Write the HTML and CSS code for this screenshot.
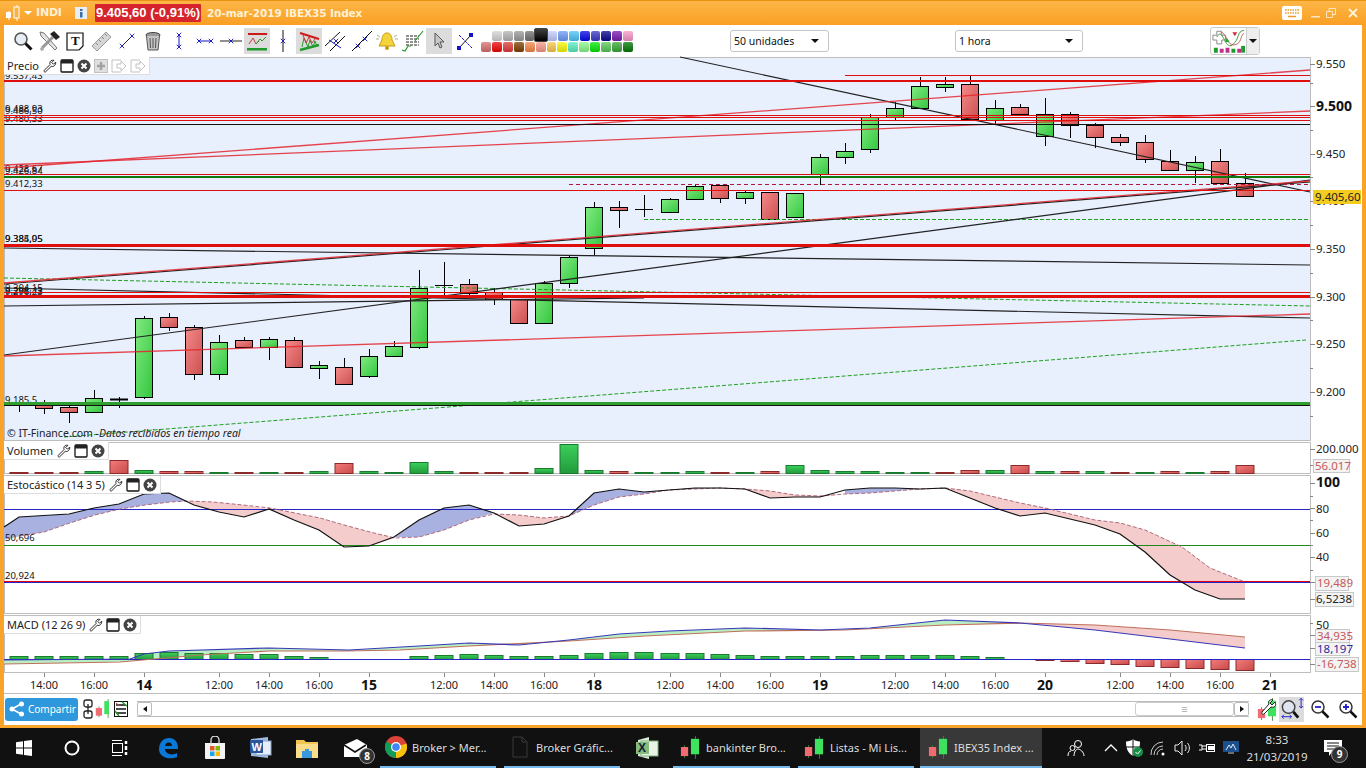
FILE: index.html
```html
<!DOCTYPE html>
<html lang="es">
<head>
<meta charset="utf-8">
<title>IBEX35 Index</title>
<link rel="stylesheet" href="styles.css">
</head>
<body>
<svg class="defs" width="0" height="0">
  <defs>
    <linearGradient id="gg" x1="0" y1="0" x2="1" y2="1"><stop offset="0" stop-color="#82ea82"/><stop offset="1" stop-color="#33c73f"/></linearGradient>
    <linearGradient id="rg" x1="0" y1="0" x2="1" y2="1"><stop offset="0" stop-color="#f58a8a"/><stop offset="1" stop-color="#cc5050"/></linearGradient>
    <linearGradient id="hg" x1="0" y1="0" x2="0" y2="1"><stop offset="0" stop-color="#3ccf5a"/><stop offset="1" stop-color="#219a3c"/></linearGradient>
    <linearGradient id="hr" x1="0" y1="0" x2="1" y2="1"><stop offset="0" stop-color="#f47c7c"/><stop offset="1" stop-color="#c84a4a"/></linearGradient>
    <symbol id="wrench" viewBox="0 0 16 16"><path d="M14.500 3.500 12 6 10 4l2.500-2.500C10 .8 7.700 2.300 7.800 5c0 .5.1 1 .3 1.300L1.600 12.800c-.9 1-.2 2.400 1.200 2l6.600-6.400c2.800.9 5.500-1.500 5.100-4.900Z" fill="#fff" stroke="#222" stroke-width="1.100"/></symbol>
    <symbol id="win" viewBox="0 0 14 14"><rect x="1" y="1" width="12" height="12" rx="1" fill="#fff" stroke="#111" stroke-width="1.300"/><rect x="1" y="1" width="12" height="3.500" fill="#222"/></symbol>
    <symbol id="close" viewBox="0 0 14 14"><circle cx="7" cy="7" r="6.500" fill="#444"/><path d="M4.500 4.500l5 5m0-5-5 5" stroke="#fff" stroke-width="2"/></symbol>
    <symbol id="bx" viewBox="0 0 8 8"><path d="M1 1l6 6m0-6-6 6" stroke="#1313c4" stroke-width="1.200" fill="none"/></symbol>
    <symbol id="cndl" viewBox="0 0 22 26"><path d="M5 11v14M17 1v25" stroke="#3a8a3a"/><rect x="1" y="13" width="8" height="10" fill="#f26a72"/><rect x="12" y="4" width="9" height="17" fill="#3fe25f"/></symbol>
  </defs>
</svg>

<div class="window">
  <header class="titlebar">
    <svg class="t-candle" viewBox="0 0 16 18" width="16" height="18"><path d="M4 7v9M12 1v16" stroke="#fff"/><rect x="1" y="8" width="5" height="6" fill="#fff"/><rect x="9" y="3" width="5" height="11" fill="#fbb13f" stroke="#fff"/></svg>
    <span class="t-arrow"></span>
    <span class="t-indi">INDI</span>
    <svg class="t-info" viewBox="0 0 12 12" width="12" height="12"><rect width="12" height="12" fill="#e7eef6"/><rect x="5" y="2" width="2.500" height="2" fill="#3a6ea8"/><rect x="5" y="5" width="2.500" height="5.500" fill="#3a6ea8"/></svg>
    <span class="t-price">9.405,60 (-0,91%)</span>
    <span class="t-name">20-mar-2019 IBEX35 Index</span>
    <span class="spacer"></span>
    <svg class="t-key" viewBox="0 0 20 14" width="20" height="14"><rect width="20" height="14" rx="2" fill="#fff"/><path d="M3 4h14M3 7h14" stroke="#e99a2a" stroke-width="1.500" stroke-dasharray="1.500 1"/><path d="M6 10.500h8" stroke="#e99a2a" stroke-width="1.500"/></svg>
    <svg class="t-ctl" viewBox="0 0 10 10" width="10" height="10"><rect x="0" y="8" width="9" height="1.500" fill="#fde6c0"/></svg>
    <svg class="t-ctl" viewBox="0 0 10 10" width="10" height="10"><path d="M.5 3.500h6v6h-6zM3 3.500V.5h6.500v6H7" fill="none" stroke="#fde6c0"/></svg>
    <svg class="t-ctl t-x" viewBox="0 0 10 10" width="10" height="10"><path d="M1 1l8 8m0-8-8 8" stroke="#fff3dc" stroke-width="1.800"/></svg>
  </header>

  <div class="content">
    <div class="toolbar">
      <div class="tools">
        <span class="tbtn"><svg viewBox="0 0 22 22"><circle cx="9" cy="9" r="6" fill="#e7edf5" stroke="#555" stroke-width="1.600"/><path d="M13.500 13.500l6 6" stroke="#111" stroke-width="3"/></svg></span>
        <span class="tbtn"><svg viewBox="0 0 22 22"><path d="M3 6l14 14 2-2L6 3 2 2z" fill="#e4e4e4" stroke="#777"/><path d="M4 18 15 7" stroke="#999" stroke-width="3"/><path d="M12 4l4-3 6 6-4 3z" fill="#222"/><path d="M3 21l-1-3 3-1 1 3z" fill="#aaa"/></svg></span>
        <span class="tbtn"><svg viewBox="0 0 22 22"><path d="M3 3h16v13l-4 4H3z" fill="#fff" stroke="#111" stroke-width="1.200"/><text x="7" y="15" class="ic-t">T</text></svg></span>
        <span class="tbtn"><svg viewBox="0 0 22 22"><path d="M2 16 16 2l5 5L7 21z" fill="#d6d6d6" stroke="#999"/><path d="M6 13l2 2M9 10l2 2M12 7l2 2M15 4l2 2" stroke="#888"/></svg></span>
        <span class="tbtn"><svg viewBox="0 0 22 22"><path d="M6 16 16 6" stroke="#222"/><use href="#bx" x="3" y="13" width="6" height="6"/><use href="#bx" x="13" y="3" width="6" height="6"/></svg></span>
        <span class="tbtn"><svg viewBox="0 0 22 22"><ellipse cx="11" cy="5" rx="7" ry="2.500" fill="#999" stroke="#444"/><path d="M4.500 6l1.500 14h10l1.500-14" fill="#c4c4c4" stroke="#555"/><path d="M8 8l.5 10M11 8v10M14 8l-.5 10" stroke="#555"/></svg></span>
        <span class="tbtn"><svg viewBox="0 0 22 22"><path d="M11 4v14" stroke="#1313c4"/><use href="#bx" x="8" y="2" width="6" height="6"/><use href="#bx" x="8" y="14" width="6" height="6"/></svg></span>
        <span class="tbtn"><svg viewBox="0 0 22 22"><path d="M4 11h14" stroke="#1313c4"/><use href="#bx" x="2" y="8" width="6" height="6"/><use href="#bx" x="14" y="8" width="6" height="6"/></svg></span>
        <span class="tbtn"><svg viewBox="0 0 22 22"><path d="M0 11h22" stroke="#222"/><use href="#bx" x="8" y="8" width="6" height="6"/></svg></span>
        <span class="tbtn active"><svg viewBox="0 0 22 22"><rect x="2" y="3" width="19" height="2" fill="#c81a1a"/><rect x="1" y="18" width="20" height="2.500" fill="#1f9a2c"/><path d="M3 14l4-6 3 6 3-3" stroke="#c83a3a" fill="none"/><path d="M10 14l4-5 2 2 4-4" stroke="#2a9a2a" fill="none"/></svg></span>
        <span class="tbtn"><svg viewBox="0 0 22 22"><path d="M11 0v22" stroke="#111"/><use href="#bx" x="8" y="8" width="6" height="6"/></svg></span>
        <span class="tbtn active"><svg viewBox="0 0 22 22"><path d="M2 3l19 6" stroke="#d01818" stroke-width="2"/><path d="M2 20l19-5" stroke="#1f9a2c" stroke-width="2.500"/><path d="M4 17l2-9 4 9 2-7 3 7 2-6 2 5" stroke="#2a9a2a" fill="none"/><path d="M5 5l3 8 3-6 3 6 3-4" stroke="#c83a3a" fill="none"/></svg></span>
        <span class="tbtn"><svg viewBox="0 0 22 22"><path d="M1 16 16 2M6 21 21 6" stroke="#111"/><path d="M5 10l12 8" stroke="#1313c4"/><use href="#bx" x="9" y="8" width="6" height="6"/></svg></span>
        <span class="tbtn"><svg viewBox="0 0 22 22"><path d="M2 21 22 1" stroke="#111"/><use href="#bx" x="5" y="13" width="6" height="6"/><use href="#bx" x="12" y="6" width="6" height="6"/></svg></span>
        <span class="tbtn"><svg viewBox="0 0 22 22"><path d="M11 3c-4 0-5 4-5 7l-3 6h16l-3-6c0-3-1-7-5-7z" fill="#f4d43a" stroke="#c89a10"/><circle cx="11" cy="18" r="2" fill="#c89a10"/><path d="M1 5l3 2M21 5l-3 2M0 9h3M22 9h-3" stroke="#aa8"/></svg></span>
        <span class="tbtn"><svg viewBox="0 0 22 22"><path d="M4 6h13M4 9h13M4 12h13M4 15h13" stroke="#222" stroke-dasharray="3 1"/><path d="M0 20l3 1 3-5h3M13 11 21 1" stroke="#2a9a2a" fill="none" stroke-width="1.200"/></svg></span>
        <span class="tbtn active"><svg viewBox="0 0 22 22"><path d="M7 3v13l3-3 2 5 2-1-2-5h4z" fill="#c8c8c8" stroke="#555"/></svg></span>
        <span class="tbtn"><svg viewBox="0 0 22 22"><path d="M5 18 17 5" stroke="#111"/><path d="M5 5l13 13" stroke="#1313c4" stroke-dasharray="3 1"/><rect x="3" y="16" width="4" height="4" fill="#1313c4"/><rect x="15" y="3" width="4" height="4" fill="#1313c4"/></svg></span>
      </div>
      <div class="palette">
        <div class="swatch-row row-top">
          <i class="sw c1"></i><i class="sw c2"></i><i class="sw c3"></i><i class="sw c4"></i><i class="sw sel"></i><i class="sw c6"></i><i class="sw c7"></i><i class="sw c8"></i><i class="sw c9"></i><i class="sw c10"></i><i class="sw c11"></i><i class="sw c12"></i><i class="sw c13"></i>
        </div>
        <div class="swatch-row">
          <i class="sw d1"></i><i class="sw d2"></i><i class="sw d3"></i><i class="sw d4"></i><i class="sw d5"></i><i class="sw d6"></i><i class="sw d7"></i><i class="sw d8"></i><i class="sw d9"></i><i class="sw d10"></i><i class="sw d11"></i><i class="sw d12"></i><i class="sw d13"></i><i class="sw d14"></i>
        </div>
      </div>
      <div class="select sel-units"><span>50 unidades</span><b class="caret"></b></div>
      <div class="select sel-time"><span>1 hora</span><b class="caret"></b></div>
      <div class="indic">
        <span class="indic-main"><svg viewBox="0 0 36 26" width="36" height="26"><path d="M2 7h4V3h5v4h4v5h-4v4H6v-4H2z" fill="#fff" stroke="#888"/><path d="M6 9c6-12 8 14 16 8s4-14 12-15" stroke="#3a9a3a" fill="none"/><path d="M10 4c6 0 6 14 14 13s6-10 10-12" stroke="#c85a5a" fill="none"/><path d="M14 14h5l-2.500-4z" fill="#1faa2a"/><path d="M22 4h5l-2.500 4z" fill="#d02a3a"/><path d="M3 20h4v5H3zM21 21h4v4h-4z" fill="#1f9a2c"/><path d="M9 21h4v4H9zM15 20h4v5h-4zM27 21h4v4h-4z" fill="#c0308a"/><path d="M31 18h4v7h-4z" fill="#1f9a2c"/></svg></span>
        <span class="indic-drop"><b class="caret"></b></span>
      </div>
    </div>

    <section class="panel panel-price">
      <svg class="chart" viewBox="0 57 1358 384" width="1358" height="384">
        <rect class="plot" x="0.5" y="57.500" width="1306" height="383"/>
        <g transform="translate(-4 0)">
        <g stroke="#000" fill="none">
          <path d="M19.500 402v10M44.500 400v14M69.500 404v19M94.500 390v22M119.500 397v11M144.500 316v83M169.500 313v18M194.500 325v55M219.500 335v45M244.500 337v10M269.500 337v23M294.500 337v30M319.500 361v18M344.500 358v26M369.500 349v29M394.500 341v15M419.500 270v79M444.500 262v36M469.500 279v17M494.500 288v17M519.500 299v24M544.500 281v42M569.500 255v33M594.500 202v54M619.500 201v27M644.500 195v22M670.500 198v14M695.500 184v15M720.500 185v18M745.500 190v14M770.500 192v27M795.500 193v24M820.500 154v31M845.500 143v21M870.500 114v39M895.500 102v18M920.500 77v31M945.500 77v15M970.500 76v43M995.500 100v25M1020.500 104v10M1045.500 98v48M1070.500 112v26M1095.500 123v25M1120.500 134v12M1145.500 135v28M1170.500 150v20M1195.500 156v27M1220.500 149v34M1245.500 173v23"/>
          <path d="M10 404.500h18M435 285.500h18M635 209.500h18"/>
          <path d="M110 399.500h18" stroke-width="2"/>
        </g>
        <g fill="url(#gg)" stroke="#000">
          <rect x="85.500" y="398.500" width="17" height="14"/><rect x="135.500" y="318.500" width="17" height="79"/><rect x="210.500" y="342.500" width="17" height="32"/><rect x="260.500" y="339.500" width="17" height="8"/><rect x="310.500" y="365.500" width="17" height="3"/><rect x="360.500" y="356.500" width="17" height="20"/><rect x="385.500" y="346.500" width="17" height="10"/><rect x="410.500" y="288.500" width="17" height="59"/><rect x="535.500" y="283.500" width="17" height="40"/><rect x="560.500" y="257.500" width="17" height="26"/><rect x="585.500" y="207.500" width="17" height="41"/><rect x="661.500" y="199.500" width="17" height="13"/><rect x="686.500" y="186.500" width="17" height="13"/><rect x="736.500" y="192.500" width="17" height="6"/><rect x="786.500" y="193.500" width="17" height="24"/><rect x="811.500" y="157.500" width="17" height="17"/><rect x="836.500" y="151.500" width="17" height="6"/><rect x="861.500" y="117.500" width="17" height="32"/><rect x="886.500" y="108.500" width="17" height="9"/><rect x="911.500" y="86.500" width="17" height="22"/><rect x="936.500" y="84.500" width="17" height="3"/><rect x="986.500" y="108.500" width="17" height="12"/><rect x="1036.500" y="114.500" width="17" height="22"/><rect x="1186.500" y="162.500" width="17" height="8"/>
        </g>
        <g fill="url(#rg)" stroke="#000">
          <rect x="35.500" y="405.500" width="17" height="3"/><rect x="60.500" y="407.500" width="17" height="5"/><rect x="160.500" y="317.500" width="17" height="10"/><rect x="185.500" y="327.500" width="17" height="47"/><rect x="235.500" y="340.500" width="17" height="7"/><rect x="285.500" y="340.500" width="17" height="27"/><rect x="335.500" y="367.500" width="17" height="17"/><rect x="460.500" y="284.500" width="17" height="9"/><rect x="485.500" y="292.500" width="17" height="7"/><rect x="510.500" y="299.500" width="17" height="24"/><rect x="610.500" y="207.500" width="17" height="3"/><rect x="711.500" y="185.500" width="17" height="13"/><rect x="761.500" y="192.500" width="17" height="27"/><rect x="961.500" y="84.500" width="17" height="35"/><rect x="1011.500" y="107.500" width="17" height="7"/><rect x="1061.500" y="114.500" width="17" height="11"/><rect x="1086.500" y="125.500" width="17" height="12"/><rect x="1111.500" y="137.500" width="17" height="5"/><rect x="1136.500" y="142.500" width="17" height="17"/><rect x="1161.500" y="161.500" width="17" height="9"/><rect x="1211.500" y="161.500" width="17" height="22"/><rect x="1236.500" y="183.500" width="17" height="13"/>
        </g>
        </g>
        <g class="labels">
          <text x="1" y="112">9.488,93</text><text x="1" y="114">9.486,50</text><text x="1" y="122">9.480,33</text>
          <text x="1" y="172">9.428,67</text><text x="1" y="174">9.426,84</text><text x="1" y="187">9.412,33</text>
          <text x="1" y="242">9.385,05</text><text x="1" y="242">9.384,95</text>
          <text x="1" y="291">9.304,15</text><text x="1" y="294">9.298,43</text><text x="1" y="295">9.296,23</text>
          <text x="1" y="403">9.185,5</text><text x="1" y="79">9.537,43</text>
        </g>
        <g fill="none" class="lines">
          <path class="l-green-d" d="M60 437 1302 340"/>
          <path class="l-green-d" d="M640 219.500H1306"/>
          <path class="l-green-d" d="M0 278 1306 306"/>
          <path class="l-blk" d="M676 57 1306 192"/>
          <path class="l-blk" d="M0 355 1306 180"/>
          <path class="l-blk" d="M0 284 1306 182"/>
          <path class="l-blk" d="M0 248 1306 265"/>
          <path class="l-blk" d="M0 288 1306 318"/>
          <path class="l-blk" d="M0 306 640 298"/>
          <path class="l-red-s" d="M0 283 1306 181"/>
          <path class="l-red-s" d="M0 356 1306 314"/>
          <path class="l-red-s" d="M0 168 1306 70"/>
          <path class="l-red-s" d="M0 165 1306 111"/>
          <path class="l-red crisp" d="M841 75.500H1306M0 115.500H1306M0 117.500H1306M0 120.500H1306M0 174.500H1306M0 190.500H1306M0 292.500H1306"/>
          <path class="l-maroon crisp" d="M565 184.500H1306"/>
          <path class="l-k crisp" d="M0 124.500H1306M0 405.500H1306"/>
          <path class="l-red w2 crisp" d="M0 81H1306"/>
          <path class="l-red w3 crisp" d="M0 245.500H1306M0 296.500H1306"/>
          <path class="l-dgreen w2 crisp" d="M0 177H1306"/>
          <path class="l-lgreen w3 crisp" d="M0 403H1306"/>
        </g>
        <text x="3" y="437" class="wm">© IT-Finance.com -<tspan class="wm-i">Datos recibidos en tiempo real</tspan></text>
        <path class="tick" d="M1306 64.500h5M1306 83.500h3M1306 106.500h5M1306 130.500h3M1306 154.500h5M1306 177.500h3M1306 201.500h5M1306 225.500h3M1306 249.500h5M1306 273.500h3M1306 297.500h5M1306 320.500h3M1306 344.500h5M1306 368.500h3M1306 392.500h5M1306 416.500h3"/>
        <g class="axis">
          <text x="1312" y="68">9.550</text><text x="1312" y="205">9.400</text><text x="1312" y="158">9.450</text><text x="1312" y="253">9.350</text><text x="1312" y="301">9.300</text><text x="1312" y="348">9.250</text><text x="1312" y="396">9.200</text>
          <text x="1312" y="111" class="ax-b">9.500</text>
        </g>
        <rect x="1309" y="190" width="48" height="14" class="tag-y"/>
        <text x="1311" y="201" class="axis-t">9.405,60</text>
      </svg>
      <div class="legend leg-price"><span>Precio</span>
        <svg class="lg" width="14" height="14"><use href="#wrench"/></svg>
        <svg class="lg" width="14" height="14"><use href="#win"/></svg>
        <svg class="lg" width="14" height="14"><use href="#close"/></svg>
        <svg class="lg dim" viewBox="0 0 14 14" width="14" height="14"><rect x=".5" y=".5" width="13" height="13" fill="#ddd" stroke="#bbb"/><path d="M7 3v8M3 7h8" stroke="#999" stroke-width="2.500"/></svg>
        <svg class="lg dim" viewBox="0 0 16 14" width="16" height="14"><path d="M10 1H1v12h9M10 5H6v4h4v3l5-5-5-5z" fill="#fff" stroke="#bbb"/></svg>
        <svg class="lg dim" viewBox="0 0 16 14" width="16" height="14"><path d="M10 1H1v12h9M10 5H6v4h4v3l5-5-5-5z" fill="#fff" stroke="#bbb"/></svg>
      </div>
    </section>

    <section class="panel panel-vol">
      <svg class="chart" viewBox="0 442 1358 32" width="1358" height="32">
        <rect class="plot-w" x="0.5" y="442.500" width="1306" height="31"/>
        <g fill="url(#hr)" stroke="#8a2a2a">
          <rect x="6" y="472.500" width="18" height="1"/><rect x="31" y="472.500" width="18" height="1"/><rect x="56" y="472.500" width="18" height="1"/><rect x="106" y="460.500" width="18" height="13"/><rect x="156" y="471.500" width="18" height="2"/><rect x="181" y="471.500" width="18" height="2"/><rect x="231" y="472.500" width="18" height="1"/><rect x="281" y="472.500" width="18" height="1"/><rect x="331" y="463.500" width="18" height="10"/><rect x="456" y="472.500" width="18" height="1"/><rect x="481" y="472.500" width="18" height="1"/><rect x="506" y="472.500" width="18" height="1"/><rect x="606" y="471.500" width="18" height="2"/><rect x="707" y="472.500" width="18" height="1"/><rect x="757" y="471.500" width="18" height="2"/><rect x="932" y="472.500" width="18" height="1"/><rect x="957" y="470.500" width="18" height="3"/><rect x="1007" y="465.500" width="18" height="8"/><rect x="1057" y="471.500" width="18" height="2"/><rect x="1107" y="472.500" width="18" height="1"/><rect x="1157" y="471.500" width="18" height="2"/><rect x="1207" y="471.500" width="18" height="2"/><rect x="1232" y="465.500" width="18" height="8"/>
        </g>
        <g fill="url(#hg)" stroke="#1a7a30">
          <rect x="81" y="471.500" width="18" height="2"/><rect x="131" y="470.500" width="18" height="3"/><rect x="206" y="472.500" width="18" height="1"/><rect x="256" y="472.500" width="18" height="1"/><rect x="306" y="471.500" width="18" height="2"/><rect x="356" y="471.500" width="18" height="2"/><rect x="381" y="472.500" width="18" height="1"/><rect x="406" y="462.500" width="18" height="11"/><rect x="431" y="471.500" width="18" height="2"/><rect x="531" y="468.500" width="18" height="5"/><rect x="556" y="444.500" width="18" height="29"/><rect x="581" y="470.500" width="18" height="3"/><rect x="631" y="472.500" width="18" height="1"/><rect x="657" y="472.500" width="18" height="1"/><rect x="682" y="471.500" width="18" height="2"/><rect x="732" y="472.500" width="18" height="1"/><rect x="782" y="465.500" width="18" height="8"/><rect x="807" y="470.500" width="18" height="3"/><rect x="832" y="471.500" width="18" height="2"/><rect x="857" y="471.500" width="18" height="2"/><rect x="882" y="472.500" width="18" height="1"/><rect x="907" y="472.500" width="18" height="1"/><rect x="982" y="470.500" width="18" height="3"/><rect x="1032" y="471.500" width="18" height="2"/><rect x="1082" y="471.500" width="18" height="2"/><rect x="1132" y="472.500" width="18" height="1"/><rect x="1182" y="472.500" width="18" height="1"/>
        </g>
        <path class="tick" d="M1306 449.500h5M1306 465.500h5"/>
        <g class="axis"><text x="1312" y="453">200.000</text></g>
        <rect x="1309.500" y="459.500" width="36" height="13" class="tag-g"/>
        <text x="1311" y="470" class="axis-r">56.017</text>
      </svg>
      <div class="legend leg-vol"><span>Volumen</span>
        <svg class="lg" width="14" height="14"><use href="#wrench"/></svg>
        <svg class="lg" width="14" height="14"><use href="#win"/></svg>
        <svg class="lg" width="14" height="14"><use href="#close"/></svg>
      </div>
    </section>

    <section class="panel panel-stoch">
      <svg class="chart" viewBox="0 475 1358 139" width="1358" height="139">
        <rect class="plot-w" x="0.5" y="475.500" width="1306" height="138"/>
        <g class="f-blue">
          <polygon points="0,527 15,517 65,514 90,508 115,504 140,494 165,493 183,501 166,502 141,505 116,509 91,515 66,523 40,532 16,536 0,540"/>
          <polygon points="391,537 415,520 440,508 465,505 490,513 465,520 440,530 415,537"/>
          <polygon points="565,516 590,493 615,489 640,492 665,490 691,488 716,488 691,489 665,490 640,494 615,497 590,505"/>
          <polygon points="841,490 866,488 891,488 916,489 941,488 916,489 891,491 866,493 841,494"/>
        </g>
        <g class="f-pink">
          <polygon points="183,501 190,505 215,512 240,517 265,509 239,505 209,502"/>
          <polygon points="266,508 316,518 340,525 366,532 391,538 365,546 340,547 315,530 290,520 265,509"/>
          <polygon points="490,514 515,515 540,518 565,516 540,524 515,526 490,513"/>
          <polygon points="741,489 766,491 791,495 816,496 841,494 816,497 791,497 766,498"/>
          <polygon points="941,488 966,491 991,497 1016,503 1041,508 1066,514 1091,520 1116,523 1141,530 1178,547 1206,568 1241,582 1241,599 1216,599 1191,590 1166,575 1141,552 1116,534 1091,525 1066,519 1041,513 1016,516 991,508 966,498"/>
        </g>
        <path class="l-stgreen crisp" d="M0 545.500H1306"/>
        <path class="l-blue crisp" d="M0 509.500H1306M0 582.500H1306"/>
        <path class="l-dred crisp" d="M0 581.500H1306"/>
        <path class="s-d" d="M16 536 40 532 66 523 91 515 116 509 141 505 166 502 183 501 209 502 239 505 266 508 316 518 340 525 366 532 391 538 415 537 440 530 465 520 490 514 515 515 540 518 565 516 590 505 615 497 640 494 665 490 691 489 716 488 741 489 766 491 791 495 816 496 841 494 866 493 891 491 916 489 941 488 966 491 991 497 1016 503 1041 508 1066 514 1091 520 1116 523 1141 530 1178 547 1206 568 1241 582"/>
        <path class="s-k" d="M0 527 15 517 65 514 90 508 115 504 140 494 165 493 190 505 215 512 240 517 265 509 290 520 315 530 340 547 365 546 390 537 415 520 440 508 465 505 490 513 515 526 540 524 565 516 590 493 615 489 640 492 665 490 691 488 716 488 741 489 766 498 791 497 816 497 841 490 866 488 891 488 916 489 941 488 966 498 991 508 1016 516 1041 513 1066 519 1091 525 1116 534 1141 552 1166 575 1191 590 1216 599 1241 599"/>
        <g class="labels"><text x="1" y="541">50,696</text><text x="1" y="579">20,924</text></g>
        <path class="tick" d="M1306 483.500h5M1306 496.500h3M1306 508.500h5M1306 520.500h3M1306 533.500h5M1306 545.500h3M1306 557.500h5M1306 570.500h3M1306 582.500h5M1306 599.500h5"/>
        <g class="axis"><text x="1312" y="513">80</text><text x="1312" y="537">60</text><text x="1312" y="561">40</text>
        <text x="1312" y="487" class="ax-b">100</text></g>
        <rect x="1311.500" y="576.500" width="33" height="14" class="tag-g"/>
        <text x="1313" y="587" class="axis-r">19,489</text>
        <rect x="1311.500" y="592.500" width="38" height="14" class="tag-g"/>
        <text x="1312" y="603" class="axis-t">6,5238</text>
      </svg>
      <div class="legend leg-stoch"><span>Estocástico (14 3 5)</span>
        <svg class="lg" width="14" height="14"><use href="#wrench"/></svg>
        <svg class="lg" width="14" height="14"><use href="#win"/></svg>
        <svg class="lg" width="14" height="14"><use href="#close"/></svg>
      </div>
    </section>

    <section class="panel panel-macd">
      <svg class="chart" viewBox="0 615 1358 58" width="1358" height="58">
        <rect class="plot-w" x="0.5" y="615.500" width="1306" height="57"/>
        <g class="f-green"><polygon points="0,660 126,659 140,654 165,651 265,648 345,650 415,646 465,643 515,645 565,640 615,634 665,631 741,628 816,630 866,628 941,620 1016,623 941,625 841,630 741,631 641,636 565,641 465,646 396,650 341,651 265,651 196,655 116,662 0,664"/></g>
        <polygon class="f-pink" points="1016,623 1091,625 1166,630 1241,637 1241,648 1166,639 1091,630"/>
        <g fill="url(#hg)" stroke="#1a7a30">
          <rect x="6" y="656.500" width="18" height="3"/><rect x="31" y="656.500" width="18" height="3"/><rect x="56" y="656.500" width="18" height="3"/><rect x="81" y="656.500" width="18" height="3"/><rect x="106" y="656.500" width="18" height="3"/><rect x="131" y="653.500" width="18" height="6"/><rect x="156" y="652.500" width="18" height="7"/><rect x="181" y="653.500" width="18" height="6"/><rect x="206" y="653.500" width="18" height="6"/><rect x="231" y="654.500" width="18" height="5"/><rect x="256" y="654.500" width="18" height="5"/><rect x="281" y="656.500" width="18" height="3"/><rect x="306" y="657.500" width="18" height="2"/><rect x="406" y="656.500" width="18" height="3"/><rect x="431" y="655.500" width="18" height="4"/><rect x="456" y="654.500" width="18" height="5"/><rect x="481" y="655.500" width="18" height="4"/><rect x="506" y="656.500" width="18" height="3"/><rect x="531" y="656.500" width="18" height="3"/><rect x="556" y="655.500" width="18" height="4"/><rect x="581" y="653.500" width="18" height="6"/><rect x="606" y="652.500" width="18" height="7"/><rect x="631" y="652.500" width="18" height="7"/><rect x="657" y="653.500" width="18" height="6"/><rect x="682" y="653.500" width="18" height="6"/><rect x="707" y="654.500" width="18" height="5"/><rect x="732" y="655.500" width="18" height="4"/><rect x="757" y="656.500" width="18" height="3"/><rect x="782" y="656.500" width="18" height="3"/><rect x="807" y="656.500" width="18" height="3"/><rect x="832" y="656.500" width="18" height="3"/><rect x="857" y="655.500" width="18" height="4"/><rect x="882" y="655.500" width="18" height="4"/><rect x="907" y="655.500" width="18" height="4"/><rect x="932" y="655.500" width="18" height="4"/><rect x="957" y="656.500" width="18" height="3"/><rect x="982" y="657.500" width="18" height="2"/>
        </g>
        <g fill="url(#hr)" stroke="#8a2a2a">
          <rect x="1032" y="659.500" width="18" height="1"/><rect x="1057" y="659.500" width="18" height="2"/><rect x="1082" y="659.500" width="18" height="4"/><rect x="1107" y="659.500" width="18" height="5"/><rect x="1132" y="659.500" width="18" height="7"/><rect x="1157" y="659.500" width="18" height="8"/><rect x="1182" y="659.500" width="18" height="9"/><rect x="1207" y="659.500" width="18" height="10"/><rect x="1232" y="659.500" width="18" height="11"/>
        </g>
        <path class="l-blue crisp" d="M0 659.500H1306"/>
        <path class="m-s" d="M0 664 116 662 196 655 265 651 341 651 396 650 465 646 565 641 641 636 741 631 841 630 941 625 1016 623 1091 625 1166 630 1241 637"/>
        <path class="m-m" d="M0 660 126 659 140 654 165 651 265 648 345 650 415 646 465 643 515 645 565 640 615 634 665 631 741 628 816 630 866 628 941 620 1016 623 1091 630 1166 639 1241 648"/>
        <path class="tick" d="M1306 623.500h3M1306 635.500h5M1306 648.500h5M1306 664.500h5"/>
        <g class="axis"><text x="1312" y="629">50</text></g>
        <rect x="1311.500" y="629.500" width="34" height="13" class="tag-g"/>
        <text x="1313" y="640" class="axis-r">34,935</text>
        <rect x="1311.500" y="642.500" width="34" height="13" class="tag-g"/>
        <text x="1313" y="653" class="axis-bl">18,197</text>
        <rect x="1311.500" y="657.500" width="43" height="14" class="tag-g"/>
        <text x="1313" y="668" class="axis-r">-16,738</text>
      </svg>
      <div class="legend leg-macd"><span>MACD (12 26 9)</span>
        <svg class="lg" width="14" height="14"><use href="#wrench"/></svg>
        <svg class="lg" width="14" height="14"><use href="#win"/></svg>
        <svg class="lg" width="14" height="14"><use href="#close"/></svg>
      </div>
    </section>

    <div class="timeaxis">
      <svg class="chart" viewBox="0 673 1358 20" width="1358" height="20">
        <path class="tick" d="M40.500 673v4M90.500 673v4M140.500 673v4M215.500 673v4M265.500 673v4M315.500 673v4M365.500 673v4M440.500 673v4M490.500 673v4M540.500 673v4M590.500 673v4M666.500 673v4M716.500 673v4M766.500 673v4M816.500 673v4M891.500 673v4M941.500 673v4M991.500 673v4M1041.500 673v4M1116.500 673v4M1166.500 673v4M1216.500 673v4M1266.500 673v4"/>
        <g class="tx">
          <text x="40" y="689">14:00</text><text x="90" y="689">16:00</text><text x="215" y="689">12:00</text><text x="265" y="689">14:00</text><text x="315" y="689">16:00</text><text x="440" y="689">12:00</text><text x="490" y="689">14:00</text><text x="540" y="689">16:00</text><text x="666" y="689">12:00</text><text x="716" y="689">14:00</text><text x="766" y="689">16:00</text><text x="891" y="689">12:00</text><text x="941" y="689">14:00</text><text x="991" y="689">16:00</text><text x="1116" y="689">12:00</text><text x="1166" y="689">14:00</text><text x="1216" y="689">16:00</text>
        </g>
        <g class="tx tx-b">
          <text x="140" y="690">14</text><text x="365" y="690">15</text><text x="590" y="690">18</text><text x="816" y="690">19</text><text x="1041" y="690">20</text><text x="1266" y="690">21</text>
        </g>
      </svg>
    </div>

    <div class="bottombar">
      <button class="share">
        <svg viewBox="0 0 16 16" width="16" height="16"><path d="M3 8l9-5M3 8l9 5" stroke="#fff" stroke-width="1.500"/><circle cx="3" cy="8" r="2.500" fill="#fff"/><circle cx="12.500" cy="3" r="2.500" fill="#fff"/><circle cx="12.500" cy="13" r="2.500" fill="#fff"/></svg>
        <span>Compartir</span>
      </button>
      <svg class="bb-ic" viewBox="0 0 26 20" width="26" height="20"><path d="M3 1h4a2 2 0 0 1 2 2v3a2 2 0 0 1-2 2H3a2 2 0 0 1-2-2V3a2 2 0 0 1 2-2zM3 12h4a2 2 0 0 1 2 2v3a2 2 0 0 1-2 2H3a2 2 0 0 1-2-2v-3a2 2 0 0 1 2-2zM5 5v10" fill="none" stroke="#222" stroke-width="1.300"/><use href="#cndl" x="12" y="-1" width="17" height="20"/></svg>
      <svg class="bb-ic2" viewBox="0 0 14 16" width="14" height="16"><rect x=".5" y=".5" width="13" height="15" fill="#fff" stroke="#111"/><path d="M2 4h10M2 8h10M2 12h10" stroke="#111" stroke-width="1.500"/><path d="M8 1l5 4M1 10l4 5" stroke="#2a9a2a" stroke-width="1.500"/><path d="M2 2l4 3" stroke="#d04a4a"/></svg>
      <div class="scroll">
        <span class="sb"><b class="tri-l"></b></span>
        <span class="spacer"></span>
        <span class="thumb">≡</span>
        <span class="sb"><b class="tri-r"></b></span>
      </div>
      <svg class="bb-tool" viewBox="0 0 20 24" width="20" height="24"><use href="#cndl" x="0" y="0" width="20" height="24"/><path d="M18 5l-3 3-2-2 3-3c-3-1-5 1-4 4l-7 8c-1 2 1 3 2 2l7-7c3 1 6-1 4-5z" fill="#fff" stroke="#222"/></svg>
      <span class="bb-active"><svg viewBox="0 0 26 24" width="26" height="24"><circle cx="10" cy="10" r="6.500" fill="#dfe5ee" stroke="#444" stroke-width="1.500"/><path d="M15 15l5 6" stroke="#111" stroke-width="3"/><path d="M23 1v10M21 3l2-2 2 2M21 9l2 2 2-2M3 20h10M5 18l-2 2 2 2M11 18l2 2-2 2" fill="none" stroke="#2222cc"/></svg></span>
      <svg class="bb-z" viewBox="0 0 20 20" width="20" height="20"><circle cx="8" cy="8" r="6" fill="#fff" stroke="#333" stroke-width="1.500"/><path d="M5 8h6" stroke="#2222cc" stroke-width="1.800"/><path d="M12.500 12.500l6 6" stroke="#111" stroke-width="2.500"/></svg>
      <svg class="bb-z" viewBox="0 0 20 20" width="20" height="20"><circle cx="8" cy="8" r="6" fill="#fff" stroke="#333" stroke-width="1.500"/><path d="M5 8h6M8 5v6" stroke="#2222cc" stroke-width="1.800"/><path d="M12.500 12.500l6 6" stroke="#111" stroke-width="2.500"/></svg>
    </div>
  </div>
</div>

<footer class="taskbar">
  <span class="tk w48"><svg viewBox="0 0 16 16" width="16" height="16"><path d="M0 2.200 7 1.200V7.500H0zM8 1 16 0V7.500H8zM0 8.500H7V14.800L0 13.800zM8 8.500H16V16L8 15z" fill="#fff"/></svg></span>
  <span class="tk w48"><svg viewBox="0 0 16 16" width="16" height="16"><circle cx="8" cy="8" r="6.500" fill="none" stroke="#fff" stroke-width="2"/></svg></span>
  <span class="tk w48"><svg viewBox="0 0 18 16" width="18" height="16"><path d="M1 .5h10M1 15.500h10" stroke="#fff"/><rect x="1.500" y="3.500" width="10" height="9" fill="none" stroke="#fff"/><path d="M15 1v3M15 6v4M15 12v3" stroke="#fff" stroke-width="2.500"/></svg></span>
  <span class="tk w48"><svg viewBox="0 0 22 22" width="22" height="22"><path d="M2 12C2 4 8 1 12 1c6 0 9 4 9 11H8c0 5 7 7 12 4v4c-7 3-18 1-18-8zM8 9h7c0-5-7-4-7 0z" fill="#0a78d7"/></svg></span>
  <span class="tk w46"><svg viewBox="0 0 24 24" width="24" height="24"><path d="M2 7h20v15a1 1 0 0 1-1 1H3a1 1 0 0 1-1-1z" fill="#f4f4f4"/><path d="M8 9V4a4 4 0 0 1 8 0v5" fill="none" stroke="#ddd" stroke-width="1.300"/><rect x="7" y="10" width="4.500" height="4.500" fill="#e25a2b"/><rect x="12.500" y="10" width="4.500" height="4.500" fill="#7fba00"/><rect x="7" y="15.500" width="4.500" height="4.500" fill="#1ea4e9"/><rect x="12.500" y="15.500" width="4.500" height="4.500" fill="#ffb900"/></svg></span>
  <span class="tk w46"><svg viewBox="0 0 24 24" width="24" height="24"><path d="M2 3 19 1v21L2 20z" fill="#9fb9e0"/><rect x="7" y="5" width="15" height="14" fill="#e8eef8" stroke="#8aa5cc"/><rect x="1" y="4" width="13" height="13" fill="#2a5699"/><text x="2.500" y="14.500" class="ic-w">W</text></svg></span>
  <span class="tk w46"><svg viewBox="0 0 24 22" width="24" height="22"><path d="M1 3h8l2 2h12v16H1z" fill="#f0c653"/><path d="M1 7h22v14H1z" fill="#f8dd8a"/><rect x="7" y="14" width="10" height="7" fill="#3a96dd"/><rect x="10" y="12" width="4" height="3" fill="#3a96dd"/></svg></span>
  <span class="tk t-mail"><svg viewBox="0 0 24 18" width="24" height="18"><path d="M1 6 14 0l10 6v12H1z" fill="#fff"/><path d="M1 6l11 7 11-7" fill="none" stroke="#111" stroke-width="1.500"/></svg><b class="badge b-mail">8</b></span>
  <span class="tk tk-app t-chrome"><svg viewBox="0 0 22 22" width="22" height="22"><circle cx="11" cy="11" r="11" fill="#db4437"/><path d="M11 11 21.500 7.500A11 11 0 0 1 11 22z" fill="#f4c20d"/><path d="M11 11 11 22A11 11 0 0 1 1.500 5.500z" fill="#0f9d58"/><circle cx="11" cy="11" r="5" fill="#fff"/><circle cx="11" cy="11" r="3.800" fill="#4285f4"/></svg><span>Broker &gt; Mer...</span></span>
  <span class="tk tk-app t-file"><svg viewBox="0 0 16 22" width="16" height="22"><path d="M1 1h9l5 5v15H1zM10 1v5h5" fill="none" stroke="#3a3a3a"/></svg><span>Broker Gráfic...</span></span>
  <span class="tk t-excel"><svg viewBox="0 0 24 22" width="24" height="22"><path d="M3 3 14 0v22L3 19z" fill="#d7ead4"/><rect x="6" y="4" width="17" height="15" fill="#eaf4e6" stroke="#7fb27f"/><rect x="1" y="5" width="13" height="12" fill="#86bb7d"/><text x="3" y="15" class="ic-x">X</text></svg></span>
  <span class="tk tk-app t-bk"><svg width="20" height="24"><use href="#cndl"/></svg><span>bankinter Bro...</span></span>
  <span class="tk tk-app t-ls"><svg width="20" height="24"><use href="#cndl"/></svg><span>Listas - Mi Lis...</span></span>
  <span class="tk tk-app t-ibex"><svg width="20" height="24"><use href="#cndl"/></svg><span>IBEX35 Index ...</span></span>
  <span class="spacer"></span>
  <span class="sys"><svg viewBox="0 0 18 18" width="18" height="18"><circle cx="11" cy="5" r="3.500" fill="none" stroke="#fff"/><circle cx="5.500" cy="9" r="2.500" fill="none" stroke="#fff"/><path d="M7 17c0-4 2-7 4-7s6 3 6 7M1 17c0-3 1-5 3-5" fill="none" stroke="#fff"/></svg></span>
  <span class="sys s-chev"><svg viewBox="0 0 14 8" width="14" height="8"><path d="M1 7l6-6 6 6" fill="none" stroke="#fff" stroke-width="1.300"/></svg></span>
  <span class="sys s-shield"><svg viewBox="0 0 18 18" width="18" height="18"><path d="M7 0C5 2 3 2 0 2.500 0 10 2 14 7 17c5-3 7-7 7-14.500C11 2 9 2 7 0z" fill="#fff"/><path d="M0 8h14M7 0v17" stroke="#111"/><circle cx="12" cy="13" r="5" fill="#1a8f4a"/><path d="M9.500 13l2 2 3-3.500" stroke="#fff" fill="none"/></svg></span>
  <span class="sys"><svg viewBox="0 0 18 16" width="18" height="16"><path d="M1 15A12 12 0 0 1 13 2M4 15A9 9 0 0 1 13 6M7 15a6 6 0 0 1 6-6" fill="none" stroke="#ccc"/><circle cx="13" cy="14" r="1.500" fill="#fff"/></svg></span>
  <span class="sys"><svg viewBox="0 0 18 16" width="18" height="16"><path d="M1 5h3l4-4v14l-4-4H1z" fill="none" stroke="#eee"/><path d="M11 5c1.500 2 1.500 4 0 6M13.500 3c2.500 3 2.500 7 0 10" fill="none" stroke="#eee"/></svg></span>
  <span class="sys"><svg viewBox="0 0 16 12" width="16" height="12"><path d="M0 3h3v5H0M3 4h4M3 7h4" stroke="#fff" fill="none"/><rect x="7.500" y="2.500" width="8" height="7" fill="none" stroke="#fff"/><rect x="9" y="4" width="6" height="4" fill="#fff"/></svg></span>
  <span class="sys"><svg viewBox="0 0 16 14" width="16" height="14"><rect width="16" height="11" fill="#1d4f8c"/><path d="M3 9l3-5 2 3 2-4 3 6" stroke="#dbe8f6" fill="none"/><path d="M5 12h6" stroke="#ccc"/></svg></span>
  <span class="clock"><span>8:33</span><span>21/03/2019</span></span>
  <span class="notif"><svg viewBox="0 0 18 16" width="18" height="16"><path d="M0 0h18v12H8l-3 4v-4H0z" fill="#fff"/><path d="M3 3h12M3 6h12M3 9h8" stroke="#111"/></svg><b class="badge b-not">9</b></span>
</footer>
</body>
</html>
```
FILE: styles.css
```css
* { box-sizing: border-box; }
html, body { margin: 0; padding: 0; }
body {
  width: 1366px; height: 768px; overflow: hidden;
  display: flex; flex-direction: column;
  background: #111;
  font-family: "Noto Sans", "Open Sans", sans-serif;
}
.defs { position: absolute; }
.spacer { flex: 1; }
.window {
  height: 728px; padding: 0 4px 3px 4px;
  display: flex; flex-direction: column;
  background: #f9a32a;
}
.titlebar {
  height: 25px; flex: none;
  display: flex; align-items: center;
  margin: 0 -4px; padding: 0 8px 1px 5px;
  background: linear-gradient(#fdb648, #f99f24);
  border-top: 1px solid #e8920f;
  font-family: "Liberation Sans", sans-serif;
  font-weight: 700; font-size: 13px;
  color: #fff1d6;
}
.t-arrow { width: 0; height: 0; margin-left: 3px; border: 4px solid transparent; border-top: 4px solid #fff; border-bottom: 0; }
.t-indi { margin-left: 4px; width: 39px; font-family: "DejaVu Sans", sans-serif; font-size: 11px; letter-spacing: -.2px; }
.t-info { margin-right: 8px; }
.t-price {
  height: 18px; width: 106px; line-height: 18px; text-align: center;
  background: #d5242c; color: #fff; border-radius: 1px;
  font-size: 13px; white-space: nowrap;
}
.t-name { margin-left: 6px; font-family: "DejaVu Sans", sans-serif; font-size: 10.500px; letter-spacing: -.1px; }
.t-key { margin-right: 9px; }
.t-ctl { margin-right: 5px; }
.t-x { margin-left: 7px; margin-right: 0; }

.content { flex: 1; display: flex; flex-direction: column; background: #fff; min-height: 0; }

.toolbar { height: 32px; flex: none; display: flex; align-items: center; position: relative; }
.tools { display: flex; margin-left: 6px; }
.tbtn { width: 26px; height: 26px; display: flex; align-items: center; justify-content: center; }
.tbtn svg { width: 22px; height: 22px; }
.tbtn.active { background: #dcdcdc; }
.ic-t { font: 700 13px "Liberation Serif", serif; fill: #111; }
.ic-w { font: 700 11px "Liberation Sans", sans-serif; fill: #fff; }
.ic-x { font: 700 12px "Liberation Sans", sans-serif; fill: #123; }

.palette { width: 153px; margin-left: 3px; display: flex; flex-direction: column; gap: 1px; padding-top: 1px; }
.swatch-row { display: flex; height: 10px; }
.row-top { margin-left: 11px; }
.sw { width: 10px; height: 10px; margin-right: 1px; border-radius: 2px; display: block; background-image: linear-gradient(rgba(255,255,255,.25), rgba(0,0,0,.15)); }
.c1{background-color:#d4d4d4}.c2{background-color:#b4b4b4}.c3{background-color:#9a9a9a}.c4{background-color:#707070}
.sel{background-color:#000;width:14px;height:14px;margin:-3px -1px 0 -1px;border:1px solid #444;position:relative}
.c6{background-color:#c0ccff}.c7{background-color:#6a9cf8}.c8{background-color:#4cc4f8}.c9{background-color:#0606e8}.c10{background-color:#3838c8}.c11{background-color:#06068e}.c12{background-color:#7a1ab0}.c13{background-color:#f898c8}
.d1{background-color:#d87070}.d2{background-color:#f00606}.d3{background-color:#e03a3a}.d4{background-color:#804000}.d5{background-color:#f88848}.d6{background-color:#f89888}.d7{background-color:#f8c848}.d8{background-color:#f8f806}.d9{background-color:#58f0c0}.d10{background-color:#88f888}.d11{background-color:#06e806}.d12{background-color:#58c858}.d13{background-color:#38a838}.d14{background-color:#067806}

.select {
  height: 22px; display: flex; align-items: center; justify-content: space-between;
  padding: 0 9px 0 3px; border: 1px solid #c4c4c4; border-radius: 3px; background: #fff;
  font-size: 10.500px; color: #111;
}
.caret { width: 0; height: 0; border: 4px solid transparent; border-top: 4px solid #111; border-bottom: 0; display: block; }
.sel-units { width: 99px; margin-left: 96px; }
.sel-time { width: 128px; margin-left: 126px; }
.indic { margin-left: 127px; width: 50px; height: 28px; display: flex; border: 1px solid #ccc; border-radius: 3px; }
.indic-main { width: 35px; display: flex; align-items: center; }
.indic-drop { flex: 1; display: flex; align-items: center; justify-content: center; background: #eee; border-left: 1px solid #ccc; }

.panel { position: relative; flex: none; }
.panel-price { height: 384px; }
.panel-vol { height: 32px; margin-top: 1px; }
.panel-stoch { height: 139px; margin-top: 1px; }
.panel-macd { height: 58px; margin-top: 1px; }
.chart { display: block; overflow: visible; }
.plot { fill: #e8effd; stroke: #bdbdbd; }
.plot-w { fill: #fff; stroke: #bdbdbd; }
.tick { stroke: #888; fill: none; shape-rendering: crispEdges; }
.crisp { shape-rendering: crispEdges; }

.labels text { font: 9.500px "Noto Sans", sans-serif; fill: #111; }
.wm { font: 10.500px "Noto Sans", sans-serif; fill: #222; }
.wm-i { font-style: italic; }
.axis text, .axis-t, .axis-r, .axis-bl { font: 11.500px "Noto Sans", sans-serif; fill: #222; }
.axis text.ax-b { font: 700 14px "Noto Sans", sans-serif; fill: #111; }
.axis-r { fill: #c45a5a; }
.axis-bl { fill: #2a2a9a; }
.tag-y { fill: #f4cc20; }
.tag-g { fill: #f3f3f3; stroke: #c8c8c8; }

.l-red { stroke: #e00d0d; }
.l-red-s { stroke: #e4252d; stroke-width: 1.300; opacity: .85; }
.l-blk { stroke: #222; stroke-width: 1.200; }
.l-k { stroke: #111; }
.l-maroon { stroke: #b01a3a; stroke-dasharray: 4 3; }
.l-green-d { stroke: #1fa01f; stroke-dasharray: 4 2; }
.l-dgreen { stroke: #0e7a0e; }
.l-stgreen { stroke: #1a8a1a; }
.l-lgreen { stroke: #2fa02f; }
.l-blue { stroke: #2626c8; }
.l-dred { stroke: #e00010; }
.w2 { stroke-width: 2; }
.w3 { stroke-width: 3; }
.f-blue { fill: #a9b1e0; }
.f-pink { fill: #f5cccc; }
.f-green { fill: #b9eec4; }
.s-d { fill: none; stroke: #b06a7a; stroke-dasharray: 4 2; }
.s-k { fill: none; stroke: #111; stroke-width: 1.200; }
.m-s { fill: none; stroke: #c0705a; stroke-width: 1.200; }
.m-m { fill: none; stroke: #3838b8; stroke-width: 1.200; }

.legend {
  position: absolute; left: 0; top: 0; height: 18px; padding: 0 3px;
  display: flex; align-items: center; gap: 3px;
  background: #fff; border: 1px solid #ddd; border-width: 0 1px 1px 0;
  font-size: 11px; color: #222;
}
.legend span { margin-right: 1px; }
.leg-stoch, .leg-macd { top: 1px; }
.lg { flex: none; }
.dim { opacity: .9; }

.timeaxis { height: 21px; flex: none; border-bottom: 1px solid #bdbdbd; }
.tx text { font: 11px "Noto Sans", sans-serif; fill: #222; text-anchor: middle; }
.tx-b text { font: 700 14px "Noto Sans", sans-serif; fill: #111; }

.bottombar { flex: 1; display: flex; align-items: center; padding: 0 0 1px 1px; }
.share {
  width: 73px; height: 23px; padding: 0 0 0 4px; margin: 0;
  display: flex; align-items: center; gap: 3px;
  background: #2f97dc; border: 0; border-radius: 3px; color: #fff;
  font: 10px "Noto Sans", sans-serif;
}
.share svg { flex: none; }
.bb-ic { margin-left: 5px; }
.bb-ic2 { margin-left: 5px; }
.scroll {
  width: 1112px; height: 16px; margin-left: 9px; display: flex;
  border-top: 1px solid #bbb; border-bottom: 1px solid #bbb; background: #fff;
}
.sb { width: 15px; display: flex; align-items: center; justify-content: center; border: 1px solid #bbb; border-radius: 2px; background: #fff; }
.tri-l { border: 3px solid transparent; border-right: 4px solid #111; border-left: 0; }
.tri-r { border: 3px solid transparent; border-left: 4px solid #111; border-right: 0; }
.thumb { width: 99px; text-align: center; border: 1px solid #ccc; border-radius: 3px; font-size: 11px; line-height: 12px; color: #aaa; }
.bb-tool { margin-left: 8px; }
.bb-active { width: 25px; height: 25px; margin-left: 2px; background: #dcdcdc; display: flex; align-items: center; justify-content: center; }
.bb-z { margin-left: 6px; }
.bb-z + .bb-z { margin-left: 8px; }

.taskbar {
  height: 40px; flex: none; display: flex; align-items: stretch;
  background: #111; color: #eee;
  font-size: 11px; font-family: "Noto Sans", sans-serif;
}
.tk { display: flex; align-items: center; justify-content: center; flex: none; position: relative; }
.tk svg { flex: none; }
.w48 { width: 48px; }
.w46 { width: 46px; }
.t-mail { width: 50px; }
.tk-app { justify-content: flex-start; border-bottom: 2px solid #76b9ed; white-space: nowrap; overflow: hidden; color: #ddd; }
.t-chrome { width: 116px; padding-left: 5px; gap: 5px; }
.t-file { width: 116px; margin-left: 8px; padding-left: 8px; gap: 8px; }
.t-excel { width: 53px; }
.t-bk { width: 117px; padding-left: 7px; gap: 6px; }
.t-ls { width: 116px; margin-left: 8px; padding-left: 6px; gap: 6px; }
.t-ibex { width: 122px; margin-left: 6px; padding-left: 8px; gap: 6px; background: #383838; }
.badge {
  position: absolute; width: 16px; height: 16px; border-radius: 50%;
  background: #333; border: 1px solid #999; color: #fff;
  font: 700 10px/14px "Noto Sans", sans-serif; text-align: center;
}
.b-mail { right: 5px; bottom: 4px; }
.b-not { right: 7px; bottom: 5px; width: 17px; height: 17px; line-height: 15px; }
.sys { width: 24px; display: flex; align-items: center; justify-content: center; flex: none; }
.s-chev { margin-left: 11px; }
.clock { width: 68px; display: flex; flex-direction: column; align-items: center; justify-content: center; gap: 2px; font-size: 11.500px; line-height: 15px; color: #ddd; }
.notif { width: 44px; margin-right: 11px; position: relative; display: flex; align-items: center; justify-content: center; }
```
